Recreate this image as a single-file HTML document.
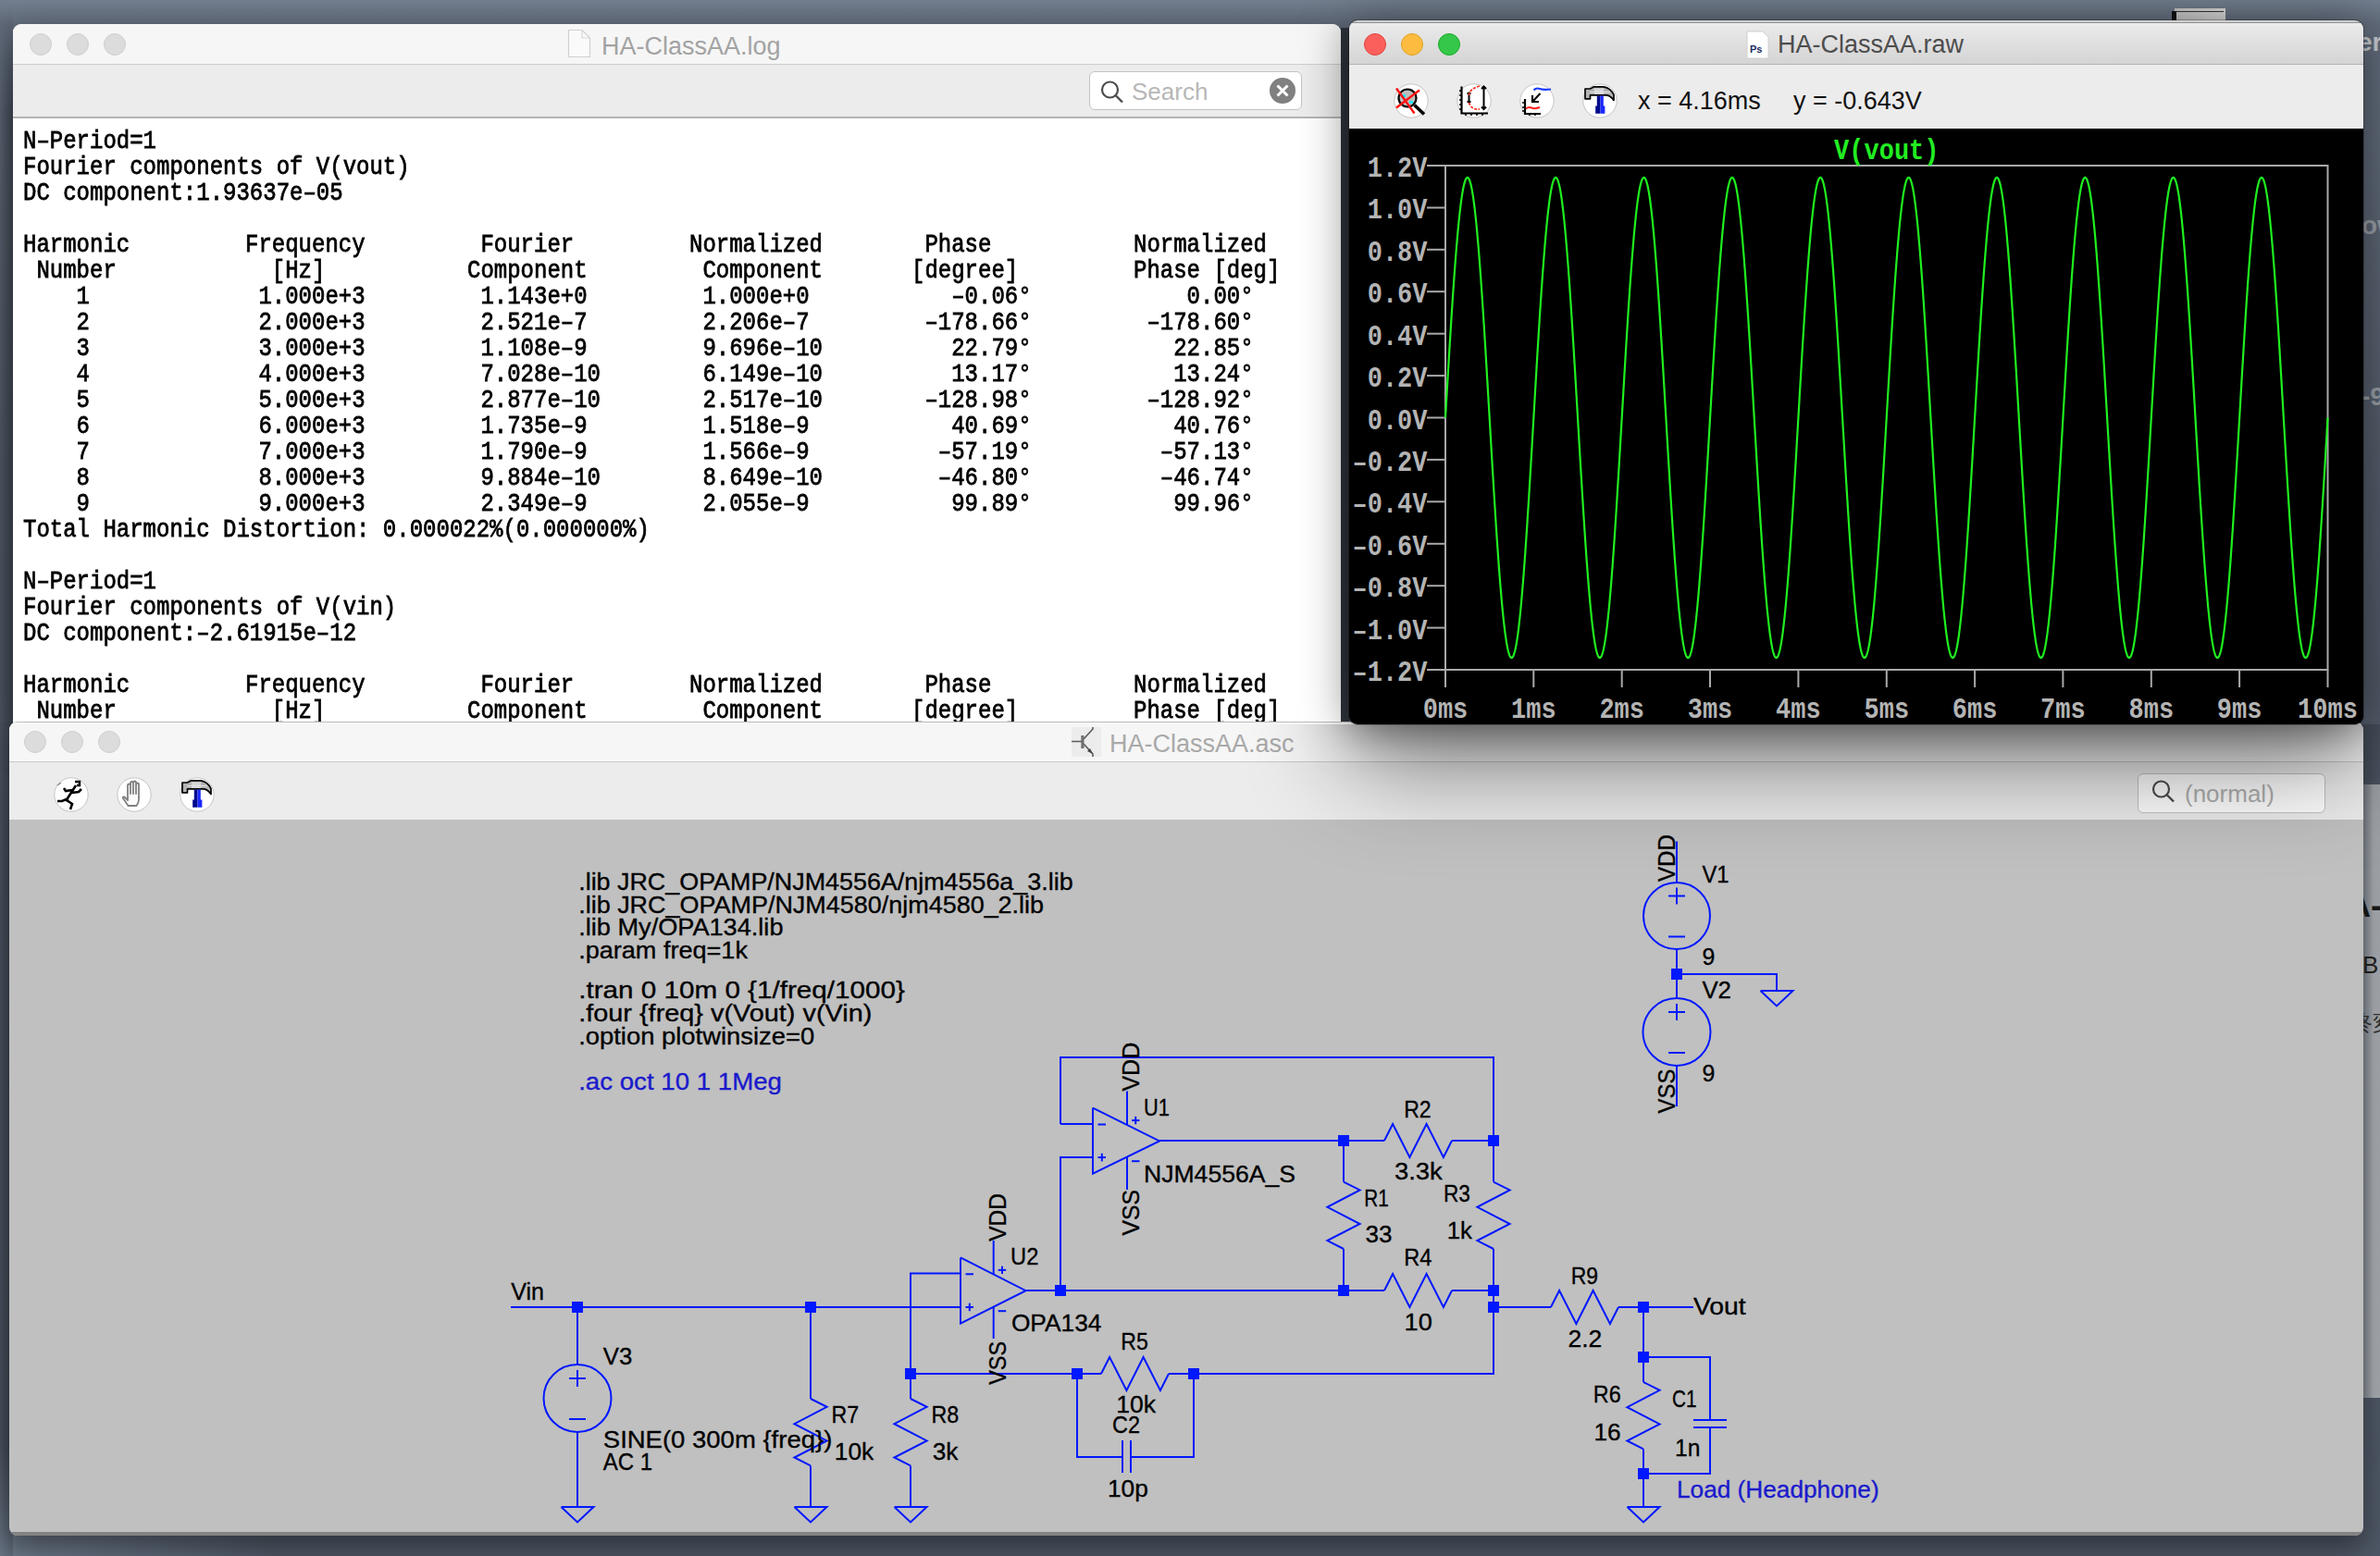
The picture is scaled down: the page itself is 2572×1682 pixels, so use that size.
<!DOCTYPE html>
<html><head><meta charset="utf-8"><title>LTspice</title>
<style>
html,body{margin:0;padding:0;}
body{width:2572px;height:1682px;overflow:hidden;position:relative;
 background:linear-gradient(180deg,#737f8f 0px,#636d7d 26px,#545d6b 500px,#4c5563 1100px,#4e5765 1682px);
 font-family:"Liberation Sans",sans-serif;}
.abs{position:absolute;}
.win{position:absolute;overflow:hidden;}
.tl{position:absolute;width:24px;height:24px;border-radius:50%;box-sizing:border-box;}
.tl.in{background:#dcdcdc;border:1px solid #cfcfcf;}
.mono{font-family:"Liberation Mono",monospace;}
.row{position:absolute;left:0;height:28px;line-height:28px;white-space:pre;font-family:"Liberation Mono",monospace;font-size:24px;color:#000;transform:scaleY(1.13);transform-origin:0 20.4px;-webkit-text-stroke:0.7px #000;}
.row span{position:absolute;top:0;}
</style></head><body>

<div class="abs" style="left:0;top:1560px;width:300px;height:122px;background:radial-gradient(ellipse at 0% 100%,#6c7888 0%,rgba(70,78,90,0) 70%);"></div>
<div class="abs" style="left:0;top:0;width:14px;height:1682px;background:linear-gradient(90deg,rgba(60,67,77,0.2),rgba(50,56,66,0.75));-webkit-mask-image:linear-gradient(180deg,rgba(0,0,0,0) 10px,#000 120px,#000 1560px,rgba(0,0,0,0.3) 1682px);"></div>
<div class="abs" style="left:2554px;top:848px;width:18px;height:663px;background:linear-gradient(90deg,#80868f,#a9adb3 60%,#a3a7ad);"></div>
<div class="abs" style="left:2536px;top:958px;font-size:36px;font-weight:bold;color:#1a1a1a;white-space:nowrap;">A-</div>
<div class="abs" style="left:2553px;top:1028px;font-size:26px;color:#222;">B</div>
<div class="abs" style="left:2540px;top:1090px;font-size:24px;color:#333;white-space:nowrap;">終変</div>
<div class="abs" style="left:2548px;top:30px;font-size:28px;color:#c8ccd2;font-weight:bold;white-space:nowrap;">er</div>
<div class="abs" style="left:2552px;top:228px;font-size:28px;color:#9aa0a8;font-weight:bold;white-space:nowrap;">ow</div>
<div class="abs" style="left:2552px;top:413px;font-size:28px;color:#9aa0a8;font-weight:bold;white-space:nowrap;">-9</div>
<div class="abs" style="left:2350px;top:9px;width:55px;height:13px;background:linear-gradient(90deg,#c8c8c8,#dcdcdc);"></div>
<div class="abs" style="left:2352px;top:12px;width:51px;height:1px;background:#333;"></div>
<div class="abs" style="left:2347px;top:12px;width:5px;height:10px;background:#111;"></div>
<div class="win" style="left:14px;top:26px;width:1435px;height:760px;border-radius:9px 9px 0 0;background:#fff;box-shadow:0 10px 40px rgba(0,0,0,0.35);">
<div class="abs" style="left:0;top:0;width:1435px;height:43px;background:#f6f6f6;border-bottom:1px solid #cdcdcd;"></div>
<div class="abs" style="left:0;top:44px;width:1435px;height:56px;background:#ececec;border-bottom:2px solid #b4b4b4;"></div>
<div class="tl in" style="left:18px;top:10px;"></div>
<div class="tl in" style="left:58px;top:10px;"></div>
<div class="tl in" style="left:98px;top:10px;"></div>
<svg class="abs" style="left:599px;top:5px;" width="26" height="32"><path d="M1.5 1.5 H16 L24.5 10 V30.5 H1.5 Z" fill="#fafafa" stroke="#d0d0d0" stroke-width="1.2"/><path d="M16 1.5 V10 H24.5" fill="none" stroke="#d8d8d8" stroke-width="1.2"/></svg>
<div class="abs" style="left:636px;top:8px;font-size:27px;color:#a3a3a3;white-space:nowrap;line-height:32px;">HA-ClassAA.log</div>
<div class="abs" style="left:1163px;top:51px;width:230px;height:42px;background:#fff;border:1px solid #c3c3c3;border-radius:6px;box-sizing:border-box;"></div>
<svg class="abs" style="left:1174px;top:60px;" width="34" height="34"><circle cx="11.5" cy="11" r="8.5" fill="none" stroke="#4d4d4d" stroke-width="2.2"/><line x1="17.5" y1="17" x2="25" y2="24.5" stroke="#4d4d4d" stroke-width="2.4"/></svg>
<div class="abs" style="left:1209px;top:57px;font-size:26px;color:#b7b7b7;line-height:32px;">Search</div>
<svg class="abs" style="left:1358px;top:58px;" width="28" height="28"><circle cx="14" cy="14" r="14" fill="#808080"/><path d="M8.5 8.5 L19.5 19.5 M19.5 8.5 L8.5 19.5" stroke="#fff" stroke-width="3"/></svg>
<div id="logtext" class="abs" style="left:0;top:0;width:1435px;height:760px;"><div class="row" style="top:113.61px;"><span style="left:11px">N–Period=1</span></div>
<div class="row" style="top:141.61px;"><span style="left:11px">Fourier components of V(vout)</span></div>
<div class="row" style="top:169.61px;"><span style="left:11px">DC component:1.93637e–05</span></div>
<div class="row" style="top:225.61px;"><span style="left:11px">Harmonic</span><span style="left:251px">Frequency</span><span style="left:491px"> Fourier </span><span style="left:731px">Normalized</span><span style="left:971px"> Phase  </span><span style="left:1211px">Normalized</span></div>
<div class="row" style="top:253.61px;"><span style="left:11px"> Number </span><span style="left:251px">  [Hz]   </span><span style="left:491px">Component</span><span style="left:731px"> Component</span><span style="left:971px">[degree]</span><span style="left:1211px">Phase [deg]</span></div>
<div class="row" style="top:281.61px;"><span style="left:11px">    1   </span><span style="left:251px"> 1.000e+3</span><span style="left:491px"> 1.143e+0</span><span style="left:731px"> 1.000e+0</span><span style="left:971px">   –0.06°</span><span style="left:1211px">    0.00°</span></div>
<div class="row" style="top:309.61px;"><span style="left:11px">    2   </span><span style="left:251px"> 2.000e+3</span><span style="left:491px"> 2.521e–7</span><span style="left:731px"> 2.206e–7</span><span style="left:971px"> –178.66°</span><span style="left:1211px"> –178.60°</span></div>
<div class="row" style="top:337.61px;"><span style="left:11px">    3   </span><span style="left:251px"> 3.000e+3</span><span style="left:491px"> 1.108e–9</span><span style="left:731px"> 9.696e–10</span><span style="left:971px">   22.79°</span><span style="left:1211px">   22.85°</span></div>
<div class="row" style="top:365.61px;"><span style="left:11px">    4   </span><span style="left:251px"> 4.000e+3</span><span style="left:491px"> 7.028e–10</span><span style="left:731px"> 6.149e–10</span><span style="left:971px">   13.17°</span><span style="left:1211px">   13.24°</span></div>
<div class="row" style="top:393.61px;"><span style="left:11px">    5   </span><span style="left:251px"> 5.000e+3</span><span style="left:491px"> 2.877e–10</span><span style="left:731px"> 2.517e–10</span><span style="left:971px"> –128.98°</span><span style="left:1211px"> –128.92°</span></div>
<div class="row" style="top:421.61px;"><span style="left:11px">    6   </span><span style="left:251px"> 6.000e+3</span><span style="left:491px"> 1.735e–9</span><span style="left:731px"> 1.518e–9</span><span style="left:971px">   40.69°</span><span style="left:1211px">   40.76°</span></div>
<div class="row" style="top:449.61px;"><span style="left:11px">    7   </span><span style="left:251px"> 7.000e+3</span><span style="left:491px"> 1.790e–9</span><span style="left:731px"> 1.566e–9</span><span style="left:971px">  –57.19°</span><span style="left:1211px">  –57.13°</span></div>
<div class="row" style="top:477.61px;"><span style="left:11px">    8   </span><span style="left:251px"> 8.000e+3</span><span style="left:491px"> 9.884e–10</span><span style="left:731px"> 8.649e–10</span><span style="left:971px">  –46.80°</span><span style="left:1211px">  –46.74°</span></div>
<div class="row" style="top:505.61px;"><span style="left:11px">    9   </span><span style="left:251px"> 9.000e+3</span><span style="left:491px"> 2.349e–9</span><span style="left:731px"> 2.055e–9</span><span style="left:971px">   99.89°</span><span style="left:1211px">   99.96°</span></div>
<div class="row" style="top:533.61px;"><span style="left:11px">Total Harmonic Distortion: 0.000022%(0.000000%)</span></div>
<div class="row" style="top:589.61px;"><span style="left:11px">N–Period=1</span></div>
<div class="row" style="top:617.61px;"><span style="left:11px">Fourier components of V(vin)</span></div>
<div class="row" style="top:645.61px;"><span style="left:11px">DC component:–2.61915e–12</span></div>
<div class="row" style="top:701.61px;"><span style="left:11px">Harmonic</span><span style="left:251px">Frequency</span><span style="left:491px"> Fourier </span><span style="left:731px">Normalized</span><span style="left:971px"> Phase  </span><span style="left:1211px">Normalized</span></div>
<div class="row" style="top:729.61px;"><span style="left:11px"> Number </span><span style="left:251px">  [Hz]   </span><span style="left:491px">Component</span><span style="left:731px"> Component</span><span style="left:971px">[degree]</span><span style="left:1211px">Phase [deg]</span></div>
<div class="row" style="top:757.61px;"><span style="left:11px">    1   </span><span style="left:251px"> 1.000e+3</span><span style="left:491px"> 3.000e–1</span><span style="left:731px"> 1.000e+0</span><span style="left:971px">    0.00°</span><span style="left:1211px">    0.00°</span></div></div>
</div>
<div class="abs" style="left:10px;top:780px;width:2544px;height:880px;border-radius:9px;box-shadow:0 12px 30px rgba(0,0,0,0.42);clip-path:inset(0 -80px -80px -80px);"></div>
<div class="win" style="left:10px;top:780px;width:2544px;height:880px;border-radius:9px;background:#c0c0c0;">
<div class="abs" style="left:0;top:0;width:2544px;height:43px;background:#f6f6f6;border-bottom:1px solid #c9c9c9;"></div>
<div class="abs" style="left:0;top:0;width:2544px;height:1px;background:#bcbcbc;"></div>
<div class="abs" style="left:0;top:44px;width:2544px;height:62px;background:#ececec;"></div>
<div class="abs" style="left:0;top:876px;width:2544px;height:4px;background:#838383;"></div>
<div class="tl in" style="left:16px;top:10px;"></div>
<div class="tl in" style="left:56px;top:10px;"></div>
<div class="tl in" style="left:96px;top:10px;"></div>
<svg class="abs" style="left:1148px;top:6px;" width="32" height="32"><rect x="0" y="0" width="32" height="32" fill="#ececec"/><path d="M0 15.5 H11 M11.5 9 V23 M13 13 L23 2 V0 M13 18 L23 29 V32" stroke="#5a5a5a" stroke-width="1.6" fill="none"/><rect x="10.5" y="9" width="3" height="14" fill="#707070"/><path d="M23 29 L17 26 L20 23 Z" fill="#444"/></svg>
<div class="abs" style="left:1189px;top:8px;font-size:27px;color:#a9a9a9;white-space:nowrap;line-height:32px;">HA-ClassAA.asc</div>
<div id="asctool" class="abs" style="left:0;top:44px;width:2544px;height:62px;"><div style="position:absolute;left:47.7px;top:15.8px;width:38px;height:38px;"><svg width="38" height="38" viewBox="0 0 38 38"><circle cx="19" cy="19" r="18.2" fill="#fff" stroke="#c4c4c4" stroke-width="1"/><path d="M23 5 h5 v4 h-3" fill="none" stroke="#000" stroke-width="2.4"/><path d="M24 9 L13 26 M20 14 L13 15 L11 12 M19 17 L27 16 L30 13 M16 23 L9 26 L4 26 M14 25 L20 29 L18 35" fill="none" stroke="#000" stroke-width="2.6"/><path d="M4 9 L8 6" stroke="#888" stroke-width="1.2"/></svg></div><div style="position:absolute;left:115.9px;top:15.8px;width:38px;height:38px;"><svg width="38" height="38" viewBox="0 0 38 38"><circle cx="19" cy="19" r="18.2" fill="#fff" stroke="#c4c4c4" stroke-width="1"/><path d="M12.5 31 L7 23 Q6 21 8.5 21.5 L12 25 V9 Q12 7.5 13.5 7.5 T15 9 V18 V6.5 Q15 5 16.5 5 T18 6.5 V18 V6 Q18 4.5 19.5 4.5 T21 6 V18 V8 Q21 6.5 22.5 6.5 T24 8 V24 Q24 28 21.5 31 Z" fill="#fafafa" stroke="#808080" stroke-width="1.8" stroke-linejoin="round"/></svg></div><div style="position:absolute;left:184.0px;top:15.8px;width:38px;height:38px;"><svg width="38" height="38" viewBox="0 0 38 38"><circle cx="19" cy="19" r="18.2" fill="#fff" stroke="#c4c4c4" stroke-width="1"/><path d="M3 6 H8.5 L12.5 3.8 H23 Q30.5 5 34 12.5 V18.5 Q31.5 14 26.5 12.8 H8.5 V16.8 H3 Z" fill="#b4b4b4" stroke="#000" stroke-width="1.7" stroke-linejoin="round"/><path d="M13 5.5 H23 V12 H13 Z" fill="#d8d8d8"/><path d="M8.5 9.5 H30" stroke="#e6e6e6" stroke-width="1.2"/><path d="M15.8 13.5 H19.5 V24.5 H19.5 V32.8 H14.2 V24.5 H15.8 Z" fill="#000a8c"/><path d="M19.5 13.5 H22.8 V24.5 H24.4 V32.8 H19.5 Z" fill="#1a28ff"/></svg></div></div>
<div class="abs" style="left:2300px;top:56px;width:203px;height:43px;background:#fff;border:1px solid #c3c3c3;border-radius:6px;box-sizing:border-box;"></div>
<svg class="abs" style="left:2314px;top:62px;" width="34" height="34"><circle cx="11.5" cy="11" r="8.5" fill="none" stroke="#4d4d4d" stroke-width="2.2"/><line x1="17.5" y1="17" x2="25" y2="24.5" stroke="#4d4d4d" stroke-width="2.4"/></svg>
<div class="abs" style="left:2351px;top:62px;font-size:26px;color:#b0b0b0;line-height:32px;">(normal)</div>
<div id="sch" class="abs" style="left:0;top:106px;width:2544px;height:770px;"><svg width="2544" height="770" style="position:absolute;left:0;top:0;"><g transform="translate(-10 -886)"><g fill="none" stroke="#0018ff" stroke-width="2" stroke-linejoin="miter" stroke-linecap="butt"><path d="M1146.0 1215.0 L1146.0 1143.0 L1614.0 1143.0 L1614.0 1233.0"/><path d="M1146.0 1215.0 L1181.0 1215.0"/><path d="M1146.0 1395.0 L1146.0 1251.0 L1181.0 1251.0"/><path d="M1181.0 1197.6 L1253.0 1233.4 L1181.0 1268.7 L1181.0 1197.6"/><path d="M1186.5 1215.5 L1195.0 1215.5"/><path d="M1186.5 1251.1 L1195.0 1251.1"/><path d="M1190.8 1246.8 L1190.8 1255.4"/><path d="M1223.0 1211.1 L1231.5 1211.1"/><path d="M1227.2 1206.9 L1227.2 1215.3"/><path d="M1223.0 1255.2 L1231.5 1255.2"/><path d="M1218.0 1179.5 L1218.0 1216.0"/><path d="M1218.0 1251.0 L1218.0 1286.0"/><path d="M1253.0 1233.0 L1496.0 1233.0"/><path d="M1496.0 1233.0 L1505.1 1215.0 L1523.4 1251.0 L1541.6 1215.0 L1559.9 1251.0 L1569.0 1233.0"/><path d="M1569.0 1233.0 L1614.0 1233.0"/><path d="M1452.0 1233.0 L1452.0 1277.6"/><path d="M1452.0 1277.6 L1469.6 1286.4 L1434.4 1304.8 L1469.6 1323.0 L1434.4 1341.1 L1452.0 1350.0"/><path d="M1452.0 1350.0 L1452.0 1395.0"/><path d="M1614.0 1233.0 L1614.0 1277.6"/><path d="M1614.0 1277.6 L1631.6 1286.4 L1596.4 1304.8 L1631.6 1323.0 L1596.4 1341.1 L1614.0 1350.0"/><path d="M1614.0 1350.0 L1614.0 1485.0 L1290.0 1485.0"/><path d="M1108.5 1395.0 L1496.0 1395.0"/><path d="M1496.0 1395.0 L1505.1 1377.0 L1523.4 1413.0 L1541.6 1377.0 L1559.9 1413.0 L1569.0 1395.0"/><path d="M1569.0 1395.0 L1614.0 1395.0"/><path d="M984.0 1485.0 L1190.0 1485.0"/><path d="M1190.0 1485.0 L1199.1 1467.0 L1217.4 1503.0 L1235.6 1467.0 L1253.9 1503.0 L1263.0 1485.0"/><path d="M1263.0 1485.0 L1290.0 1485.0"/><path d="M1164.0 1485.0 L1164.0 1575.0 L1213.0 1575.0"/><path d="M1213.0 1557.0 L1213.0 1592.0"/><path d="M1222.0 1557.0 L1222.0 1592.0"/><path d="M1222.0 1575.0 L1290.0 1575.0 L1290.0 1485.0"/><path d="M1614.0 1413.0 L1676.0 1413.0"/><path d="M1676.0 1413.0 L1685.1 1395.0 L1703.4 1431.0 L1721.6 1395.0 L1739.9 1431.0 L1749.0 1413.0"/><path d="M1749.0 1413.0 L1830.0 1413.0"/><path d="M1776.0 1413.0 L1776.0 1494.0"/><path d="M1776.0 1494.0 L1793.6 1502.8 L1758.4 1521.2 L1793.6 1539.4 L1758.4 1557.5 L1776.0 1566.4"/><path d="M1776.0 1566.4 L1776.0 1629.0"/><path d="M1758.5 1629.0 L1793.5 1629.0 L1776.0 1645.5 L1758.5 1629.0"/><path d="M1776.0 1467.0 L1848.0 1467.0 L1848.0 1535.0"/><path d="M1830.0 1535.0 L1866.0 1535.0"/><path d="M1830.0 1543.0 L1866.0 1543.0"/><path d="M1848.0 1543.0 L1848.0 1593.0 L1776.0 1593.0"/><path d="M552.0 1413.0 L1038.0 1413.0"/><path d="M624.0 1413.0 L624.0 1475.0"/><circle cx="624.0" cy="1511.5" r="36.5"/><path d="M615.0 1490.0 L633.0 1490.0"/><path d="M624.0 1481.0 L624.0 1499.0"/><path d="M615.0 1534.0 L633.0 1534.0"/><path d="M624.0 1548.0 L624.0 1629.0"/><path d="M606.5 1629.0 L641.5 1629.0 L624.0 1645.5 L606.5 1629.0"/><path d="M876.0 1413.0 L876.0 1512.0"/><path d="M876.0 1512.0 L893.6 1520.8 L858.4 1539.2 L893.6 1557.4 L858.4 1575.5 L876.0 1584.4"/><path d="M876.0 1584.5 L876.0 1629.0"/><path d="M858.5 1629.0 L893.5 1629.0 L876.0 1645.5 L858.5 1629.0"/><path d="M1038.0 1376.5 L984.0 1376.5 L984.0 1512.0"/><path d="M984.0 1512.0 L1001.6 1520.8 L966.4 1539.2 L1001.6 1557.4 L966.4 1575.5 L984.0 1584.4"/><path d="M984.0 1584.5 L984.0 1629.0"/><path d="M966.5 1629.0 L1001.5 1629.0 L984.0 1645.5 L966.5 1629.0"/><path d="M1038.0 1359.4 L1108.5 1395.2 L1038.0 1430.7 L1038.0 1359.4"/><path d="M1043.5 1377.3 L1052.0 1377.3"/><path d="M1043.5 1413.0 L1052.0 1413.0"/><path d="M1047.8 1408.7 L1047.8 1417.2"/><path d="M1078.7 1372.9 L1087.2 1372.9"/><path d="M1083.0 1368.7 L1083.0 1377.1"/><path d="M1078.7 1417.2 L1087.2 1417.2"/><path d="M1073.7 1341.0 L1073.7 1378.0"/><path d="M1073.7 1412.0 L1073.7 1447.0"/><path d="M1812.0 909.5 L1812.0 954.0"/><circle cx="1812.0" cy="990.0" r="36.0"/><path d="M1803.0 968.5 L1821.0 968.5"/><path d="M1812.0 959.5 L1812.0 977.5"/><path d="M1803.0 1012.5 L1821.0 1012.5"/><path d="M1812.0 1026.0 L1812.0 1079.0"/><circle cx="1812.0" cy="1115.5" r="36.5"/><path d="M1803.0 1094.0 L1821.0 1094.0"/><path d="M1812.0 1085.0 L1812.0 1103.0"/><path d="M1803.0 1138.0 L1821.0 1138.0"/><path d="M1812.0 1152.0 L1812.0 1196.0"/><path d="M1812.0 1053.0 L1920.0 1053.0 L1920.0 1071.0"/><path d="M1902.5 1071.0 L1937.5 1071.0 L1920.0 1087.5 L1902.5 1071.0"/><rect x="618.0" y="1407.0" width="12" height="12" fill="#0018ff" stroke="none"/><rect x="870.0" y="1407.0" width="12" height="12" fill="#0018ff" stroke="none"/><rect x="978.0" y="1479.0" width="12" height="12" fill="#0018ff" stroke="none"/><rect x="1140.0" y="1389.0" width="12" height="12" fill="#0018ff" stroke="none"/><rect x="1446.0" y="1227.0" width="12" height="12" fill="#0018ff" stroke="none"/><rect x="1608.0" y="1227.0" width="12" height="12" fill="#0018ff" stroke="none"/><rect x="1446.0" y="1389.0" width="12" height="12" fill="#0018ff" stroke="none"/><rect x="1608.0" y="1389.0" width="12" height="12" fill="#0018ff" stroke="none"/><rect x="1608.0" y="1407.0" width="12" height="12" fill="#0018ff" stroke="none"/><rect x="1158.0" y="1479.0" width="12" height="12" fill="#0018ff" stroke="none"/><rect x="1284.0" y="1479.0" width="12" height="12" fill="#0018ff" stroke="none"/><rect x="1770.0" y="1407.0" width="12" height="12" fill="#0018ff" stroke="none"/><rect x="1770.0" y="1461.0" width="12" height="12" fill="#0018ff" stroke="none"/><rect x="1770.0" y="1587.0" width="12" height="12" fill="#0018ff" stroke="none"/><rect x="1806.0" y="1047.0" width="12" height="12" fill="#0018ff" stroke="none"/></g><g font-family="Liberation Sans" font-size="26.5" fill="#000" stroke-width="0.35"><text x="625.20" y="961.6" fill="#000" stroke="#000" textLength="534.40" lengthAdjust="spacingAndGlyphs">.lib JRC_OPAMP/NJM4556A/njm4556a_3.lib</text><text x="625.20" y="986.8" fill="#000" stroke="#000" textLength="502.88" lengthAdjust="spacingAndGlyphs">.lib JRC_OPAMP/NJM4580/njm4580_2.lib</text><text x="625.20" y="1010.7" fill="#000" stroke="#000" textLength="221.31" lengthAdjust="spacingAndGlyphs">.lib My/OPA134.lib</text><text x="625.20" y="1036.0" fill="#000" stroke="#000" textLength="182.76" lengthAdjust="spacingAndGlyphs">.param freq=1k</text><text x="625.20" y="1079.3" fill="#000" stroke="#000" textLength="352.77" lengthAdjust="spacingAndGlyphs">.tran 0 10m 0 {1/freq/1000}</text><text x="625.20" y="1104.0" fill="#000" stroke="#000" textLength="317.15" lengthAdjust="spacingAndGlyphs">.four {freq} v(Vout) v(Vin)</text><text x="625.20" y="1128.7" fill="#000" stroke="#000" textLength="255.05" lengthAdjust="spacingAndGlyphs">.option plotwinsize=0</text><text x="625.20" y="1178.4" fill="#1a1acc" stroke="#1a1acc" textLength="219.75" lengthAdjust="spacingAndGlyphs">.ac oct 10 1 1Meg</text><text transform="translate(1230.5 1179.6) rotate(-90)" stroke="#000" x="0.00" y="0" textLength="52.85" lengthAdjust="spacingAndGlyphs">VDD</text><text transform="translate(1231.0 1335.5) rotate(-90)" stroke="#000" x="0.00" y="0" textLength="49.52" lengthAdjust="spacingAndGlyphs">VSS</text><text x="1236.00" y="1205.7" fill="#000" stroke="#000" textLength="27.88" lengthAdjust="spacingAndGlyphs">U1</text><text x="1236.00" y="1277.5" fill="#000" stroke="#000" textLength="164.00" lengthAdjust="spacingAndGlyphs">NJM4556A_S</text><text x="1517.20" y="1207.5" fill="#000" stroke="#000" textLength="29.48" lengthAdjust="spacingAndGlyphs">R2</text><text x="1507.00" y="1275.0" fill="#000" stroke="#000" textLength="51.79" lengthAdjust="spacingAndGlyphs">3.3k</text><text x="1474.30" y="1304.0" fill="#000" stroke="#000" textLength="26.48" lengthAdjust="spacingAndGlyphs">R1</text><text x="1475.60" y="1343.0" fill="#000" stroke="#000" textLength="28.98" lengthAdjust="spacingAndGlyphs">33</text><text x="1560.00" y="1299.0" fill="#000" stroke="#000" textLength="28.98" lengthAdjust="spacingAndGlyphs">R3</text><text x="1563.80" y="1339.0" fill="#000" stroke="#000" textLength="27.19" lengthAdjust="spacingAndGlyphs">1k</text><text x="1517.20" y="1368.0" fill="#000" stroke="#000" textLength="30.18" lengthAdjust="spacingAndGlyphs">R4</text><text x="1517.60" y="1438.0" fill="#000" stroke="#000" textLength="30.27" lengthAdjust="spacingAndGlyphs">10</text><text x="1092.10" y="1367.0" fill="#000" stroke="#000" textLength="30.28" lengthAdjust="spacingAndGlyphs">U2</text><text x="1092.90" y="1438.5" fill="#000" stroke="#000" textLength="97.51" lengthAdjust="spacingAndGlyphs">OPA134</text><text transform="translate(1087.0 1341.8) rotate(-90)" stroke="#000" x="0.00" y="0" textLength="51.75" lengthAdjust="spacingAndGlyphs">VDD</text><text transform="translate(1087.0 1496.8) rotate(-90)" stroke="#000" x="0.00" y="0" textLength="46.82" lengthAdjust="spacingAndGlyphs">VSS</text><text x="552.20" y="1405.0" fill="#000" stroke="#000" textLength="35.82" lengthAdjust="spacingAndGlyphs">Vin</text><text x="651.80" y="1475.0" fill="#000" stroke="#000" textLength="31.51" lengthAdjust="spacingAndGlyphs">V3</text><text x="651.80" y="1565.0" fill="#000" stroke="#000" textLength="247.51" lengthAdjust="spacingAndGlyphs">SINE(0 300m {freq})</text><text x="651.80" y="1589.0" fill="#000" stroke="#000" textLength="53.41" lengthAdjust="spacingAndGlyphs">AC 1</text><text x="898.50" y="1538.0" fill="#000" stroke="#000" textLength="29.78" lengthAdjust="spacingAndGlyphs">R7</text><text x="901.80" y="1578.0" fill="#000" stroke="#000" textLength="42.33" lengthAdjust="spacingAndGlyphs">10k</text><text x="1006.40" y="1538.0" fill="#000" stroke="#000" textLength="29.78" lengthAdjust="spacingAndGlyphs">R8</text><text x="1007.70" y="1578.0" fill="#000" stroke="#000" textLength="27.69" lengthAdjust="spacingAndGlyphs">3k</text><text x="1211.30" y="1459.0" fill="#000" stroke="#000" textLength="29.48" lengthAdjust="spacingAndGlyphs">R5</text><text x="1206.30" y="1526.7" fill="#000" stroke="#000" textLength="42.72" lengthAdjust="spacingAndGlyphs">10k</text><text x="1202.00" y="1549.4" fill="#000" stroke="#000" textLength="29.98" lengthAdjust="spacingAndGlyphs">C2</text><text x="1197.00" y="1617.5" fill="#000" stroke="#000" textLength="43.81" lengthAdjust="spacingAndGlyphs">10p</text><text x="1697.70" y="1387.8" fill="#000" stroke="#000" textLength="29.38" lengthAdjust="spacingAndGlyphs">R9</text><text x="1694.50" y="1455.7" fill="#000" stroke="#000" textLength="36.84" lengthAdjust="spacingAndGlyphs">2.2</text><text x="1830.00" y="1421.4" fill="#000" stroke="#000" textLength="56.75" lengthAdjust="spacingAndGlyphs">Vout</text><text x="1721.80" y="1516.0" fill="#000" stroke="#000" textLength="29.88" lengthAdjust="spacingAndGlyphs">R6</text><text x="1722.50" y="1556.5" fill="#000" stroke="#000" textLength="29.18" lengthAdjust="spacingAndGlyphs">16</text><text x="1807.00" y="1521.0" fill="#000" stroke="#000" textLength="26.58" lengthAdjust="spacingAndGlyphs">C1</text><text x="1810.00" y="1574.4" fill="#000" stroke="#000" textLength="27.38" lengthAdjust="spacingAndGlyphs">1n</text><text x="1812.00" y="1619.3" fill="#1a1acc" stroke="#1a1acc" textLength="218.70" lengthAdjust="spacingAndGlyphs">Load (Headphone)</text><text transform="translate(1809.5 953.0) rotate(-90)" stroke="#000" x="0.00" y="0" textLength="50.95" lengthAdjust="spacingAndGlyphs">VDD</text><text x="1839.40" y="953.8" fill="#000" stroke="#000" textLength="29.11" lengthAdjust="spacingAndGlyphs">V1</text><text x="1839.40" y="1042.8" fill="#000" stroke="#000" textLength="13.84" lengthAdjust="spacingAndGlyphs">9</text><text x="1839.40" y="1079.0" fill="#000" stroke="#000" textLength="31.61" lengthAdjust="spacingAndGlyphs">V2</text><text x="1839.40" y="1168.8" fill="#000" stroke="#000" textLength="13.84" lengthAdjust="spacingAndGlyphs">9</text><text transform="translate(1809.5 1203.4) rotate(-90)" stroke="#000" x="0.00" y="0" textLength="47.72" lengthAdjust="spacingAndGlyphs">VSS</text></g></g></svg></div>
</div>
<div class="abs" style="left:1449px;top:30px;width:9px;height:750px;background:#2e333b;"></div>
<div class="abs" style="left:1458px;top:22px;width:1096px;height:761px;border-radius:9px;box-shadow:0 45px 110px rgba(0,0,0,0.48);clip-path:inset(761px -250px -300px -250px);"></div>
<div class="win" style="left:1458px;top:22px;width:1096px;height:761px;border-radius:9px;background:#000;box-shadow:0 0 0 1px rgba(0,0,0,0.25), 0 4px 50px rgba(0,0,0,0.5);">
<div class="abs" style="left:0;top:0;width:1096px;height:47px;background:linear-gradient(180deg,#cfcfcf 0px,#cfcfcf 2px,#8f8f8f 2px,#8f8f8f 3px,#ecebec 3px,#d4d4d4);border-bottom:1px solid #b3b3b3;"></div>
<div class="abs" style="left:0;top:48px;width:1096px;height:69px;background:#ececec;"></div>
<div class="tl" style="left:16px;top:14px;background:#fc605c;border:1px solid #e0443e;"></div>
<div class="tl" style="left:56px;top:14px;background:#fdbc40;border:1px solid #dea123;"></div>
<div class="tl" style="left:96px;top:14px;background:#34c749;border:1px solid #1aab29;"></div>
<svg class="abs" style="left:429px;top:11px;" width="25" height="31"><path d="M1 1 H18 L24 7 V30 H1 Z" fill="#fff" stroke="#cfcfcf" stroke-width="1"/><text x="4" y="24" font-family="Liberation Sans" font-size="11" font-weight="bold" fill="#1d2a5c">Ps</text></svg>
<div class="abs" style="left:463px;top:10px;font-size:27px;color:#4d4d4d;white-space:nowrap;line-height:32px;">HA-ClassAA.raw</div>
<div id="rawtool" class="abs" style="left:0;top:48px;width:1096px;height:69px;"><div style="position:absolute;left:48.1px;top:19.5px;width:38px;height:38px;"><svg width="38" height="38" viewBox="0 0 38 38"><circle cx="19" cy="19" r="18.2" fill="#fff" stroke="#c4c4c4" stroke-width="1"/><circle cx="15" cy="16" r="9.5" fill="#bdbdbd" stroke="#000" stroke-width="2.2"/><path d="M9 12 h4 v3 h-4z M17 19 h4 v3 h-4z" fill="#22e6f0"/><path d="M22.5 23.5 L33 33.5" stroke="#000" stroke-width="3.6"/><path d="M3 5.5 L22.5 32.5 M28 7.5 L3 26.5" stroke="#ff1010" stroke-width="2.4"/></svg></div><div style="position:absolute;left:115.9px;top:19.5px;width:38px;height:38px;"><svg width="38" height="38" viewBox="0 0 38 38"><circle cx="19" cy="19" r="18.2" fill="#fff" stroke="#c4c4c4" stroke-width="1"/><path d="M5.5 3.5 V32.5 H34" fill="none" stroke="#000" stroke-width="2.2"/><path d="M3 8 h3 M3 13 h3 M3 18 h3 M3 23 h3 M3 28 h3 M10 32 v3 M16 32 v3 M22 32 v3 M28 32 v3" stroke="#000" stroke-width="1.6"/><path d="M13.5 9.5 V21.5 M11.5 11 h4 M11.5 20 h4 M29.5 3.5 V28 M27 6 l2.5 -2.5 l2.5 2.5 M27 25.5 l2.5 2.5 l2.5 -2.5" fill="none" stroke="#000" stroke-width="2"/><path d="M25 3 Q14 6 13.5 13 M13.5 21 Q16 29 25 28" fill="none" stroke="#ff3020" stroke-width="1.8" stroke-dasharray="3 1.5"/></svg></div><div style="position:absolute;left:183.6px;top:19.5px;width:38px;height:38px;"><svg width="38" height="38" viewBox="0 0 38 38"><circle cx="19" cy="19" r="18.2" fill="#fff" stroke="#c4c4c4" stroke-width="1"/><path d="M6 17 V33 H23" fill="none" stroke="#000" stroke-width="2.2"/><path d="M3 21 h3 M3 26 h3 M3 30 h3 M11 32 v3 M17 32 v3" stroke="#000" stroke-width="1.6"/><path d="M7 27.5 Q10 25 13 26.5 T22 26" fill="none" stroke="#ff2020" stroke-width="2"/><path d="M15.5 7.5 Q18 4.5 22 6 T34 6.5" fill="none" stroke="#1a3cff" stroke-width="2.2"/><path d="M22.5 11 L15 19" stroke="#000" stroke-width="2"/><path d="M14 13 V20 H21" fill="none" stroke="#000" stroke-width="2.2"/></svg></div><div style="position:absolute;left:251.9px;top:19.5px;width:38px;height:38px;"><svg width="38" height="38" viewBox="0 0 38 38"><circle cx="19" cy="19" r="18.2" fill="#fff" stroke="#c4c4c4" stroke-width="1"/><path d="M3 6 H8.5 L12.5 3.8 H23 Q30.5 5 34 12.5 V18.5 Q31.5 14 26.5 12.8 H8.5 V16.8 H3 Z" fill="#b4b4b4" stroke="#000" stroke-width="1.7" stroke-linejoin="round"/><path d="M13 5.5 H23 V12 H13 Z" fill="#d8d8d8"/><path d="M8.5 9.5 H30" stroke="#e6e6e6" stroke-width="1.2"/><path d="M15.8 13.5 H19.5 V24.5 H19.5 V32.8 H14.2 V24.5 H15.8 Z" fill="#000a8c"/><path d="M19.5 13.5 H22.8 V24.5 H24.4 V32.8 H19.5 Z" fill="#1a28ff"/></svg></div></div>
<div class="abs" style="left:312px;top:71px;font-size:27px;color:#111;white-space:pre;line-height:32px;">x = 4.16ms</div>
<div class="abs" style="left:480px;top:71px;font-size:27px;color:#111;white-space:pre;line-height:32px;">y = -0.643V</div>
<div id="plot" class="abs" style="left:0;top:117px;width:1096px;height:644px;"><div style="position:absolute;left:0;top:0;font-family:'Liberation Mono',monospace;font-size:27px;fill:#b5b5b5;"><svg font-family="Liberation Mono" font-size="27" font-weight="bold" fill="#b4b4b4" width="1096" height="644" style="position:absolute;left:0;top:0;"><rect x="104.0" y="40.0" width="953.5" height="545.0" fill="none" stroke="#a9a9a9" stroke-width="2"/><line x1="84.0" y1="40.0" x2="104.0" y2="40.0" stroke="#a9a9a9" stroke-width="2"/><text transform="translate(84.5 52.0) scale(1 1.14)" text-anchor="end">1.2V</text><line x1="84.0" y1="85.4" x2="104.0" y2="85.4" stroke="#a9a9a9" stroke-width="2"/><text transform="translate(84.5 97.4) scale(1 1.14)" text-anchor="end">1.0V</text><line x1="84.0" y1="130.8" x2="104.0" y2="130.8" stroke="#a9a9a9" stroke-width="2"/><text transform="translate(84.5 142.8) scale(1 1.14)" text-anchor="end">0.8V</text><line x1="84.0" y1="176.2" x2="104.0" y2="176.2" stroke="#a9a9a9" stroke-width="2"/><text transform="translate(84.5 188.2) scale(1 1.14)" text-anchor="end">0.6V</text><line x1="84.0" y1="221.7" x2="104.0" y2="221.7" stroke="#a9a9a9" stroke-width="2"/><text transform="translate(84.5 233.7) scale(1 1.14)" text-anchor="end">0.4V</text><line x1="84.0" y1="267.1" x2="104.0" y2="267.1" stroke="#a9a9a9" stroke-width="2"/><text transform="translate(84.5 279.1) scale(1 1.14)" text-anchor="end">0.2V</text><line x1="84.0" y1="312.5" x2="104.0" y2="312.5" stroke="#a9a9a9" stroke-width="2"/><text transform="translate(84.5 324.5) scale(1 1.14)" text-anchor="end">0.0V</text><line x1="84.0" y1="357.9" x2="104.0" y2="357.9" stroke="#a9a9a9" stroke-width="2"/><text transform="translate(84.5 369.9) scale(1 1.14)" text-anchor="end">–0.2V</text><line x1="84.0" y1="403.3" x2="104.0" y2="403.3" stroke="#a9a9a9" stroke-width="2"/><text transform="translate(84.5 415.3) scale(1 1.14)" text-anchor="end">–0.4V</text><line x1="84.0" y1="448.8" x2="104.0" y2="448.8" stroke="#a9a9a9" stroke-width="2"/><text transform="translate(84.5 460.8) scale(1 1.14)" text-anchor="end">–0.6V</text><line x1="84.0" y1="494.2" x2="104.0" y2="494.2" stroke="#a9a9a9" stroke-width="2"/><text transform="translate(84.5 506.2) scale(1 1.14)" text-anchor="end">–0.8V</text><line x1="84.0" y1="539.6" x2="104.0" y2="539.6" stroke="#a9a9a9" stroke-width="2"/><text transform="translate(84.5 551.6) scale(1 1.14)" text-anchor="end">–1.0V</text><line x1="84.0" y1="585.0" x2="104.0" y2="585.0" stroke="#a9a9a9" stroke-width="2"/><text transform="translate(84.5 597.0) scale(1 1.14)" text-anchor="end">–1.2V</text><line x1="104.0" y1="585.0" x2="104.0" y2="604.0" stroke="#a9a9a9" stroke-width="2"/><text transform="translate(104.0 636.5) scale(1 1.14)" text-anchor="middle">0ms</text><line x1="199.3" y1="585.0" x2="199.3" y2="604.0" stroke="#a9a9a9" stroke-width="2"/><text transform="translate(199.3 636.5) scale(1 1.14)" text-anchor="middle">1ms</text><line x1="294.7" y1="585.0" x2="294.7" y2="604.0" stroke="#a9a9a9" stroke-width="2"/><text transform="translate(294.7 636.5) scale(1 1.14)" text-anchor="middle">2ms</text><line x1="390.0" y1="585.0" x2="390.0" y2="604.0" stroke="#a9a9a9" stroke-width="2"/><text transform="translate(390.0 636.5) scale(1 1.14)" text-anchor="middle">3ms</text><line x1="485.4" y1="585.0" x2="485.4" y2="604.0" stroke="#a9a9a9" stroke-width="2"/><text transform="translate(485.4 636.5) scale(1 1.14)" text-anchor="middle">4ms</text><line x1="580.8" y1="585.0" x2="580.8" y2="604.0" stroke="#a9a9a9" stroke-width="2"/><text transform="translate(580.8 636.5) scale(1 1.14)" text-anchor="middle">5ms</text><line x1="676.1" y1="585.0" x2="676.1" y2="604.0" stroke="#a9a9a9" stroke-width="2"/><text transform="translate(676.1 636.5) scale(1 1.14)" text-anchor="middle">6ms</text><line x1="771.4" y1="585.0" x2="771.4" y2="604.0" stroke="#a9a9a9" stroke-width="2"/><text transform="translate(771.4 636.5) scale(1 1.14)" text-anchor="middle">7ms</text><line x1="866.8" y1="585.0" x2="866.8" y2="604.0" stroke="#a9a9a9" stroke-width="2"/><text transform="translate(866.8 636.5) scale(1 1.14)" text-anchor="middle">8ms</text><line x1="962.1" y1="585.0" x2="962.1" y2="604.0" stroke="#a9a9a9" stroke-width="2"/><text transform="translate(962.1 636.5) scale(1 1.14)" text-anchor="middle">9ms</text><line x1="1057.5" y1="585.0" x2="1057.5" y2="604.0" stroke="#a9a9a9" stroke-width="2"/><text transform="translate(1057.5 636.5) scale(1 1.14)" text-anchor="middle">10ms</text><polyline points="104.00,312.50 104.48,304.35 104.95,296.20 105.43,288.07 105.91,279.97 106.38,271.90 106.86,263.86 107.34,255.88 107.81,247.95 108.29,240.09 108.77,232.29 109.24,224.58 109.72,216.95 110.20,209.42 110.67,201.99 111.15,194.66 111.63,187.46 112.10,180.38 112.58,173.42 113.06,166.61 113.53,159.94 114.01,153.42 114.49,147.05 114.97,140.85 115.44,134.82 115.92,128.97 116.40,123.29 116.87,117.80 117.35,112.51 117.83,107.41 118.30,102.51 118.78,97.83 119.26,93.35 119.73,89.09 120.21,85.05 120.69,81.23 121.16,77.65 121.64,74.29 122.12,71.17 122.59,68.29 123.07,65.65 123.55,63.25 124.02,61.10 124.50,59.19 124.98,57.54 125.45,56.14 125.93,54.99 126.41,54.10 126.88,53.46 127.36,53.07 127.84,52.94 128.31,53.07 128.79,53.46 129.27,54.10 129.74,54.99 130.22,56.14 130.70,57.54 131.17,59.19 131.65,61.10 132.13,63.25 132.60,65.65 133.08,68.29 133.56,71.17 134.04,74.29 134.51,77.65 134.99,81.23 135.47,85.05 135.94,89.09 136.42,93.35 136.90,97.83 137.37,102.51 137.85,107.41 138.33,112.51 138.80,117.80 139.28,123.29 139.76,128.97 140.23,134.82 140.71,140.85 141.19,147.05 141.66,153.42 142.14,159.94 142.62,166.61 143.09,173.42 143.57,180.38 144.05,187.46 144.52,194.66 145.00,201.99 145.48,209.42 145.95,216.95 146.43,224.58 146.91,232.29 147.38,240.09 147.86,247.95 148.34,255.88 148.81,263.86 149.29,271.90 149.77,279.97 150.24,288.07 150.72,296.20 151.20,304.35 151.68,312.50 152.15,320.65 152.63,328.80 153.11,336.93 153.58,345.03 154.06,353.10 154.54,361.14 155.01,369.12 155.49,377.05 155.97,384.91 156.44,392.71 156.92,400.42 157.40,408.05 157.87,415.58 158.35,423.01 158.83,430.34 159.30,437.54 159.78,444.62 160.26,451.58 160.73,458.39 161.21,465.06 161.69,471.58 162.16,477.95 162.64,484.15 163.12,490.18 163.59,496.03 164.07,501.71 164.55,507.20 165.02,512.49 165.50,517.59 165.98,522.49 166.45,527.17 166.93,531.65 167.41,535.91 167.88,539.95 168.36,543.77 168.84,547.35 169.31,550.71 169.79,553.83 170.27,556.71 170.75,559.35 171.22,561.75 171.70,563.90 172.18,565.81 172.65,567.46 173.13,568.86 173.61,570.01 174.08,570.90 174.56,571.54 175.04,571.93 175.51,572.06 175.99,571.93 176.47,571.54 176.94,570.90 177.42,570.01 177.90,568.86 178.37,567.46 178.85,565.81 179.33,563.90 179.80,561.75 180.28,559.35 180.76,556.71 181.23,553.83 181.71,550.71 182.19,547.35 182.66,543.77 183.14,539.95 183.62,535.91 184.09,531.65 184.57,527.17 185.05,522.49 185.52,517.59 186.00,512.49 186.48,507.20 186.95,501.71 187.43,496.03 187.91,490.18 188.38,484.15 188.86,477.95 189.34,471.58 189.81,465.06 190.29,458.39 190.77,451.58 191.25,444.62 191.72,437.54 192.20,430.34 192.68,423.01 193.15,415.58 193.63,408.05 194.11,400.42 194.58,392.71 195.06,384.91 195.54,377.05 196.01,369.12 196.49,361.14 196.97,353.10 197.44,345.03 197.92,336.93 198.40,328.80 198.87,320.65 199.35,312.50 199.83,304.35 200.30,296.20 200.78,288.07 201.26,279.97 201.73,271.90 202.21,263.86 202.69,255.88 203.16,247.95 203.64,240.09 204.12,232.29 204.59,224.58 205.07,216.95 205.55,209.42 206.02,201.99 206.50,194.66 206.98,187.46 207.45,180.38 207.93,173.42 208.41,166.61 208.88,159.94 209.36,153.42 209.84,147.05 210.32,140.85 210.79,134.82 211.27,128.97 211.75,123.29 212.22,117.80 212.70,112.51 213.18,107.41 213.65,102.51 214.13,97.83 214.61,93.35 215.08,89.09 215.56,85.05 216.04,81.23 216.51,77.65 216.99,74.29 217.47,71.17 217.94,68.29 218.42,65.65 218.90,63.25 219.37,61.10 219.85,59.19 220.33,57.54 220.80,56.14 221.28,54.99 221.76,54.10 222.23,53.46 222.71,53.07 223.19,52.94 223.66,53.07 224.14,53.46 224.62,54.10 225.09,54.99 225.57,56.14 226.05,57.54 226.52,59.19 227.00,61.10 227.48,63.25 227.95,65.65 228.43,68.29 228.91,71.17 229.39,74.29 229.86,77.65 230.34,81.23 230.82,85.05 231.29,89.09 231.77,93.35 232.25,97.83 232.72,102.51 233.20,107.41 233.68,112.51 234.15,117.80 234.63,123.29 235.11,128.97 235.58,134.82 236.06,140.85 236.54,147.05 237.01,153.42 237.49,159.94 237.97,166.61 238.44,173.42 238.92,180.38 239.40,187.46 239.87,194.66 240.35,201.99 240.83,209.42 241.30,216.95 241.78,224.58 242.26,232.29 242.73,240.09 243.21,247.95 243.69,255.88 244.16,263.86 244.64,271.90 245.12,279.97 245.59,288.07 246.07,296.20 246.55,304.35 247.02,312.50 247.50,320.65 247.98,328.80 248.46,336.93 248.93,345.03 249.41,353.10 249.89,361.14 250.36,369.12 250.84,377.05 251.32,384.91 251.79,392.71 252.27,400.42 252.75,408.05 253.22,415.58 253.70,423.01 254.18,430.34 254.65,437.54 255.13,444.62 255.61,451.58 256.08,458.39 256.56,465.06 257.04,471.58 257.51,477.95 257.99,484.15 258.47,490.18 258.94,496.03 259.42,501.71 259.90,507.20 260.37,512.49 260.85,517.59 261.33,522.49 261.80,527.17 262.28,531.65 262.76,535.91 263.23,539.95 263.71,543.77 264.19,547.35 264.66,550.71 265.14,553.83 265.62,556.71 266.10,559.35 266.57,561.75 267.05,563.90 267.53,565.81 268.00,567.46 268.48,568.86 268.96,570.01 269.43,570.90 269.91,571.54 270.39,571.93 270.86,572.06 271.34,571.93 271.82,571.54 272.29,570.90 272.77,570.01 273.25,568.86 273.72,567.46 274.20,565.81 274.68,563.90 275.15,561.75 275.63,559.35 276.11,556.71 276.58,553.83 277.06,550.71 277.54,547.35 278.01,543.77 278.49,539.95 278.97,535.91 279.44,531.65 279.92,527.17 280.40,522.49 280.87,517.59 281.35,512.49 281.83,507.20 282.30,501.71 282.78,496.03 283.26,490.18 283.73,484.15 284.21,477.95 284.69,471.58 285.16,465.06 285.64,458.39 286.12,451.58 286.60,444.62 287.07,437.54 287.55,430.34 288.03,423.01 288.50,415.58 288.98,408.05 289.46,400.42 289.93,392.71 290.41,384.91 290.89,377.05 291.36,369.12 291.84,361.14 292.32,353.10 292.79,345.03 293.27,336.93 293.75,328.80 294.22,320.65 294.70,312.50 295.18,304.35 295.65,296.20 296.13,288.07 296.61,279.97 297.08,271.90 297.56,263.86 298.04,255.88 298.51,247.95 298.99,240.09 299.47,232.29 299.94,224.58 300.42,216.95 300.90,209.42 301.37,201.99 301.85,194.66 302.33,187.46 302.80,180.38 303.28,173.42 303.76,166.61 304.24,159.94 304.71,153.42 305.19,147.05 305.67,140.85 306.14,134.82 306.62,128.97 307.10,123.29 307.57,117.80 308.05,112.51 308.53,107.41 309.00,102.51 309.48,97.83 309.96,93.35 310.43,89.09 310.91,85.05 311.39,81.23 311.86,77.65 312.34,74.29 312.82,71.17 313.29,68.29 313.77,65.65 314.25,63.25 314.72,61.10 315.20,59.19 315.68,57.54 316.15,56.14 316.63,54.99 317.11,54.10 317.58,53.46 318.06,53.07 318.54,52.94 319.01,53.07 319.49,53.46 319.97,54.10 320.44,54.99 320.92,56.14 321.40,57.54 321.87,59.19 322.35,61.10 322.83,63.25 323.30,65.65 323.78,68.29 324.26,71.17 324.74,74.29 325.21,77.65 325.69,81.23 326.17,85.05 326.64,89.09 327.12,93.35 327.60,97.83 328.07,102.51 328.55,107.41 329.03,112.51 329.50,117.80 329.98,123.29 330.46,128.97 330.93,134.82 331.41,140.85 331.89,147.05 332.36,153.42 332.84,159.94 333.32,166.61 333.79,173.42 334.27,180.38 334.75,187.46 335.22,194.66 335.70,201.99 336.18,209.42 336.65,216.95 337.13,224.58 337.61,232.29 338.08,240.09 338.56,247.95 339.04,255.88 339.51,263.86 339.99,271.90 340.47,279.97 340.94,288.07 341.42,296.20 341.90,304.35 342.38,312.50 342.85,320.65 343.33,328.80 343.81,336.93 344.28,345.03 344.76,353.10 345.24,361.14 345.71,369.12 346.19,377.05 346.67,384.91 347.14,392.71 347.62,400.42 348.10,408.05 348.57,415.58 349.05,423.01 349.53,430.34 350.00,437.54 350.48,444.62 350.96,451.58 351.43,458.39 351.91,465.06 352.39,471.58 352.86,477.95 353.34,484.15 353.82,490.18 354.29,496.03 354.77,501.71 355.25,507.20 355.72,512.49 356.20,517.59 356.68,522.49 357.15,527.17 357.63,531.65 358.11,535.91 358.58,539.95 359.06,543.77 359.54,547.35 360.01,550.71 360.49,553.83 360.97,556.71 361.44,559.35 361.92,561.75 362.40,563.90 362.88,565.81 363.35,567.46 363.83,568.86 364.31,570.01 364.78,570.90 365.26,571.54 365.74,571.93 366.21,572.06 366.69,571.93 367.17,571.54 367.64,570.90 368.12,570.01 368.60,568.86 369.07,567.46 369.55,565.81 370.03,563.90 370.50,561.75 370.98,559.35 371.46,556.71 371.93,553.83 372.41,550.71 372.89,547.35 373.36,543.77 373.84,539.95 374.32,535.91 374.79,531.65 375.27,527.17 375.75,522.49 376.22,517.59 376.70,512.49 377.18,507.20 377.65,501.71 378.13,496.03 378.61,490.18 379.08,484.15 379.56,477.95 380.04,471.58 380.51,465.06 380.99,458.39 381.47,451.58 381.95,444.62 382.42,437.54 382.90,430.34 383.38,423.01 383.85,415.58 384.33,408.05 384.81,400.42 385.28,392.71 385.76,384.91 386.24,377.05 386.71,369.12 387.19,361.14 387.67,353.10 388.14,345.03 388.62,336.93 389.10,328.80 389.57,320.65 390.05,312.50 390.53,304.35 391.00,296.20 391.48,288.07 391.96,279.97 392.43,271.90 392.91,263.86 393.39,255.88 393.86,247.95 394.34,240.09 394.82,232.29 395.29,224.58 395.77,216.95 396.25,209.42 396.72,201.99 397.20,194.66 397.68,187.46 398.15,180.38 398.63,173.42 399.11,166.61 399.58,159.94 400.06,153.42 400.54,147.05 401.02,140.85 401.49,134.82 401.97,128.97 402.45,123.29 402.92,117.80 403.40,112.51 403.88,107.41 404.35,102.51 404.83,97.83 405.31,93.35 405.78,89.09 406.26,85.05 406.74,81.23 407.21,77.65 407.69,74.29 408.17,71.17 408.64,68.29 409.12,65.65 409.60,63.25 410.07,61.10 410.55,59.19 411.03,57.54 411.50,56.14 411.98,54.99 412.46,54.10 412.93,53.46 413.41,53.07 413.89,52.94 414.36,53.07 414.84,53.46 415.32,54.10 415.79,54.99 416.27,56.14 416.75,57.54 417.22,59.19 417.70,61.10 418.18,63.25 418.65,65.65 419.13,68.29 419.61,71.17 420.09,74.29 420.56,77.65 421.04,81.23 421.52,85.05 421.99,89.09 422.47,93.35 422.95,97.83 423.42,102.51 423.90,107.41 424.38,112.51 424.85,117.80 425.33,123.29 425.81,128.97 426.28,134.82 426.76,140.85 427.24,147.05 427.71,153.42 428.19,159.94 428.67,166.61 429.14,173.42 429.62,180.38 430.10,187.46 430.57,194.66 431.05,201.99 431.53,209.42 432.00,216.95 432.48,224.58 432.96,232.29 433.43,240.09 433.91,247.95 434.39,255.88 434.86,263.86 435.34,271.90 435.82,279.97 436.29,288.07 436.77,296.20 437.25,304.35 437.72,312.50 438.20,320.65 438.68,328.80 439.16,336.93 439.63,345.03 440.11,353.10 440.59,361.14 441.06,369.12 441.54,377.05 442.02,384.91 442.49,392.71 442.97,400.42 443.45,408.05 443.92,415.58 444.40,423.01 444.88,430.34 445.35,437.54 445.83,444.62 446.31,451.58 446.78,458.39 447.26,465.06 447.74,471.58 448.21,477.95 448.69,484.15 449.17,490.18 449.64,496.03 450.12,501.71 450.60,507.20 451.07,512.49 451.55,517.59 452.03,522.49 452.50,527.17 452.98,531.65 453.46,535.91 453.93,539.95 454.41,543.77 454.89,547.35 455.36,550.71 455.84,553.83 456.32,556.71 456.80,559.35 457.27,561.75 457.75,563.90 458.23,565.81 458.70,567.46 459.18,568.86 459.66,570.01 460.13,570.90 460.61,571.54 461.09,571.93 461.56,572.06 462.04,571.93 462.52,571.54 462.99,570.90 463.47,570.01 463.95,568.86 464.42,567.46 464.90,565.81 465.38,563.90 465.85,561.75 466.33,559.35 466.81,556.71 467.28,553.83 467.76,550.71 468.24,547.35 468.71,543.77 469.19,539.95 469.67,535.91 470.14,531.65 470.62,527.17 471.10,522.49 471.57,517.59 472.05,512.49 472.53,507.20 473.00,501.71 473.48,496.03 473.96,490.18 474.43,484.15 474.91,477.95 475.39,471.58 475.86,465.06 476.34,458.39 476.82,451.58 477.30,444.62 477.77,437.54 478.25,430.34 478.73,423.01 479.20,415.58 479.68,408.05 480.16,400.42 480.63,392.71 481.11,384.91 481.59,377.05 482.06,369.12 482.54,361.14 483.02,353.10 483.49,345.03 483.97,336.93 484.45,328.80 484.92,320.65 485.40,312.50 485.88,304.35 486.35,296.20 486.83,288.07 487.31,279.97 487.78,271.90 488.26,263.86 488.74,255.88 489.21,247.95 489.69,240.09 490.17,232.29 490.64,224.58 491.12,216.95 491.60,209.42 492.07,201.99 492.55,194.66 493.03,187.46 493.50,180.38 493.98,173.42 494.46,166.61 494.93,159.94 495.41,153.42 495.89,147.05 496.37,140.85 496.84,134.82 497.32,128.97 497.80,123.29 498.27,117.80 498.75,112.51 499.23,107.41 499.70,102.51 500.18,97.83 500.66,93.35 501.13,89.09 501.61,85.05 502.09,81.23 502.56,77.65 503.04,74.29 503.52,71.17 503.99,68.29 504.47,65.65 504.95,63.25 505.42,61.10 505.90,59.19 506.38,57.54 506.85,56.14 507.33,54.99 507.81,54.10 508.28,53.46 508.76,53.07 509.24,52.94 509.71,53.07 510.19,53.46 510.67,54.10 511.14,54.99 511.62,56.14 512.10,57.54 512.57,59.19 513.05,61.10 513.53,63.25 514.00,65.65 514.48,68.29 514.96,71.17 515.44,74.29 515.91,77.65 516.39,81.23 516.87,85.05 517.34,89.09 517.82,93.35 518.30,97.83 518.77,102.51 519.25,107.41 519.73,112.51 520.20,117.80 520.68,123.29 521.16,128.97 521.63,134.82 522.11,140.85 522.59,147.05 523.06,153.42 523.54,159.94 524.02,166.61 524.49,173.42 524.97,180.38 525.45,187.46 525.92,194.66 526.40,201.99 526.88,209.42 527.35,216.95 527.83,224.58 528.31,232.29 528.78,240.09 529.26,247.95 529.74,255.88 530.21,263.86 530.69,271.90 531.17,279.97 531.64,288.07 532.12,296.20 532.60,304.35 533.08,312.50 533.55,320.65 534.03,328.80 534.51,336.93 534.98,345.03 535.46,353.10 535.94,361.14 536.41,369.12 536.89,377.05 537.37,384.91 537.84,392.71 538.32,400.42 538.80,408.05 539.27,415.58 539.75,423.01 540.23,430.34 540.70,437.54 541.18,444.62 541.66,451.58 542.13,458.39 542.61,465.06 543.09,471.58 543.56,477.95 544.04,484.15 544.52,490.18 544.99,496.03 545.47,501.71 545.95,507.20 546.42,512.49 546.90,517.59 547.38,522.49 547.85,527.17 548.33,531.65 548.81,535.91 549.28,539.95 549.76,543.77 550.24,547.35 550.71,550.71 551.19,553.83 551.67,556.71 552.14,559.35 552.62,561.75 553.10,563.90 553.58,565.81 554.05,567.46 554.53,568.86 555.01,570.01 555.48,570.90 555.96,571.54 556.44,571.93 556.91,572.06 557.39,571.93 557.87,571.54 558.34,570.90 558.82,570.01 559.30,568.86 559.77,567.46 560.25,565.81 560.73,563.90 561.20,561.75 561.68,559.35 562.16,556.71 562.63,553.83 563.11,550.71 563.59,547.35 564.06,543.77 564.54,539.95 565.02,535.91 565.49,531.65 565.97,527.17 566.45,522.49 566.92,517.59 567.40,512.49 567.88,507.20 568.35,501.71 568.83,496.03 569.31,490.18 569.78,484.15 570.26,477.95 570.74,471.58 571.22,465.06 571.69,458.39 572.17,451.58 572.65,444.62 573.12,437.54 573.60,430.34 574.08,423.01 574.55,415.58 575.03,408.05 575.51,400.42 575.98,392.71 576.46,384.91 576.94,377.05 577.41,369.12 577.89,361.14 578.37,353.10 578.84,345.03 579.32,336.93 579.80,328.80 580.27,320.65 580.75,312.50 581.23,304.35 581.70,296.20 582.18,288.07 582.66,279.97 583.13,271.90 583.61,263.86 584.09,255.88 584.56,247.95 585.04,240.09 585.52,232.29 585.99,224.58 586.47,216.95 586.95,209.42 587.42,201.99 587.90,194.66 588.38,187.46 588.85,180.38 589.33,173.42 589.81,166.61 590.28,159.94 590.76,153.42 591.24,147.05 591.72,140.85 592.19,134.82 592.67,128.97 593.15,123.29 593.62,117.80 594.10,112.51 594.58,107.41 595.05,102.51 595.53,97.83 596.01,93.35 596.48,89.09 596.96,85.05 597.44,81.23 597.91,77.65 598.39,74.29 598.87,71.17 599.34,68.29 599.82,65.65 600.30,63.25 600.77,61.10 601.25,59.19 601.73,57.54 602.20,56.14 602.68,54.99 603.16,54.10 603.63,53.46 604.11,53.07 604.59,52.94 605.06,53.07 605.54,53.46 606.02,54.10 606.49,54.99 606.97,56.14 607.45,57.54 607.92,59.19 608.40,61.10 608.88,63.25 609.36,65.65 609.83,68.29 610.31,71.17 610.79,74.29 611.26,77.65 611.74,81.23 612.22,85.05 612.69,89.09 613.17,93.35 613.65,97.83 614.12,102.51 614.60,107.41 615.08,112.51 615.55,117.80 616.03,123.29 616.51,128.97 616.98,134.82 617.46,140.85 617.94,147.05 618.41,153.42 618.89,159.94 619.37,166.61 619.84,173.42 620.32,180.38 620.80,187.46 621.27,194.66 621.75,201.99 622.23,209.42 622.70,216.95 623.18,224.58 623.66,232.29 624.13,240.09 624.61,247.95 625.09,255.88 625.56,263.86 626.04,271.90 626.52,279.97 626.99,288.07 627.47,296.20 627.95,304.35 628.42,312.50 628.90,320.65 629.38,328.80 629.86,336.93 630.33,345.03 630.81,353.10 631.29,361.14 631.76,369.12 632.24,377.05 632.72,384.91 633.19,392.71 633.67,400.42 634.15,408.05 634.62,415.58 635.10,423.01 635.58,430.34 636.05,437.54 636.53,444.62 637.01,451.58 637.48,458.39 637.96,465.06 638.44,471.58 638.91,477.95 639.39,484.15 639.87,490.18 640.34,496.03 640.82,501.71 641.30,507.20 641.77,512.49 642.25,517.59 642.73,522.49 643.20,527.17 643.68,531.65 644.16,535.91 644.63,539.95 645.11,543.77 645.59,547.35 646.06,550.71 646.54,553.83 647.02,556.71 647.50,559.35 647.97,561.75 648.45,563.90 648.93,565.81 649.40,567.46 649.88,568.86 650.36,570.01 650.83,570.90 651.31,571.54 651.79,571.93 652.26,572.06 652.74,571.93 653.22,571.54 653.69,570.90 654.17,570.01 654.65,568.86 655.12,567.46 655.60,565.81 656.08,563.90 656.55,561.75 657.03,559.35 657.51,556.71 657.98,553.83 658.46,550.71 658.94,547.35 659.41,543.77 659.89,539.95 660.37,535.91 660.84,531.65 661.32,527.17 661.80,522.49 662.27,517.59 662.75,512.49 663.23,507.20 663.70,501.71 664.18,496.03 664.66,490.18 665.13,484.15 665.61,477.95 666.09,471.58 666.57,465.06 667.04,458.39 667.52,451.58 668.00,444.62 668.47,437.54 668.95,430.34 669.43,423.01 669.90,415.58 670.38,408.05 670.86,400.42 671.33,392.71 671.81,384.91 672.29,377.05 672.76,369.12 673.24,361.14 673.72,353.10 674.19,345.03 674.67,336.93 675.15,328.80 675.62,320.65 676.10,312.50 676.58,304.35 677.05,296.20 677.53,288.07 678.01,279.97 678.48,271.90 678.96,263.86 679.44,255.88 679.91,247.95 680.39,240.09 680.87,232.29 681.34,224.58 681.82,216.95 682.30,209.42 682.77,201.99 683.25,194.66 683.73,187.46 684.20,180.38 684.68,173.42 685.16,166.61 685.63,159.94 686.11,153.42 686.59,147.05 687.07,140.85 687.54,134.82 688.02,128.97 688.50,123.29 688.97,117.80 689.45,112.51 689.93,107.41 690.40,102.51 690.88,97.83 691.36,93.35 691.83,89.09 692.31,85.05 692.79,81.23 693.26,77.65 693.74,74.29 694.22,71.17 694.69,68.29 695.17,65.65 695.65,63.25 696.12,61.10 696.60,59.19 697.08,57.54 697.55,56.14 698.03,54.99 698.51,54.10 698.98,53.46 699.46,53.07 699.94,52.94 700.41,53.07 700.89,53.46 701.37,54.10 701.84,54.99 702.32,56.14 702.80,57.54 703.27,59.19 703.75,61.10 704.23,63.25 704.70,65.65 705.18,68.29 705.66,71.17 706.14,74.29 706.61,77.65 707.09,81.23 707.57,85.05 708.04,89.09 708.52,93.35 709.00,97.83 709.47,102.51 709.95,107.41 710.43,112.51 710.90,117.80 711.38,123.29 711.86,128.97 712.33,134.82 712.81,140.85 713.29,147.05 713.76,153.42 714.24,159.94 714.72,166.61 715.19,173.42 715.67,180.38 716.15,187.46 716.62,194.66 717.10,201.99 717.58,209.42 718.05,216.95 718.53,224.58 719.01,232.29 719.48,240.09 719.96,247.95 720.44,255.88 720.91,263.86 721.39,271.90 721.87,279.97 722.34,288.07 722.82,296.20 723.30,304.35 723.77,312.50 724.25,320.65 724.73,328.80 725.21,336.93 725.68,345.03 726.16,353.10 726.64,361.14 727.11,369.12 727.59,377.05 728.07,384.91 728.54,392.71 729.02,400.42 729.50,408.05 729.97,415.58 730.45,423.01 730.93,430.34 731.40,437.54 731.88,444.62 732.36,451.58 732.83,458.39 733.31,465.06 733.79,471.58 734.26,477.95 734.74,484.15 735.22,490.18 735.69,496.03 736.17,501.71 736.65,507.20 737.12,512.49 737.60,517.59 738.08,522.49 738.55,527.17 739.03,531.65 739.51,535.91 739.98,539.95 740.46,543.77 740.94,547.35 741.41,550.71 741.89,553.83 742.37,556.71 742.85,559.35 743.32,561.75 743.80,563.90 744.28,565.81 744.75,567.46 745.23,568.86 745.71,570.01 746.18,570.90 746.66,571.54 747.14,571.93 747.61,572.06 748.09,571.93 748.57,571.54 749.04,570.90 749.52,570.01 750.00,568.86 750.47,567.46 750.95,565.81 751.43,563.90 751.90,561.75 752.38,559.35 752.86,556.71 753.33,553.83 753.81,550.71 754.29,547.35 754.76,543.77 755.24,539.95 755.72,535.91 756.19,531.65 756.67,527.17 757.15,522.49 757.62,517.59 758.10,512.49 758.58,507.20 759.05,501.71 759.53,496.03 760.01,490.18 760.48,484.15 760.96,477.95 761.44,471.58 761.91,465.06 762.39,458.39 762.87,451.58 763.35,444.62 763.82,437.54 764.30,430.34 764.78,423.01 765.25,415.58 765.73,408.05 766.21,400.42 766.68,392.71 767.16,384.91 767.64,377.05 768.11,369.12 768.59,361.14 769.07,353.10 769.54,345.03 770.02,336.93 770.50,328.80 770.97,320.65 771.45,312.50 771.93,304.35 772.40,296.20 772.88,288.07 773.36,279.97 773.83,271.90 774.31,263.86 774.79,255.88 775.26,247.95 775.74,240.09 776.22,232.29 776.69,224.58 777.17,216.95 777.65,209.42 778.12,201.99 778.60,194.66 779.08,187.46 779.55,180.38 780.03,173.42 780.51,166.61 780.98,159.94 781.46,153.42 781.94,147.05 782.42,140.85 782.89,134.82 783.37,128.97 783.85,123.29 784.32,117.80 784.80,112.51 785.28,107.41 785.75,102.51 786.23,97.83 786.71,93.35 787.18,89.09 787.66,85.05 788.14,81.23 788.61,77.65 789.09,74.29 789.57,71.17 790.04,68.29 790.52,65.65 791.00,63.25 791.47,61.10 791.95,59.19 792.43,57.54 792.90,56.14 793.38,54.99 793.86,54.10 794.33,53.46 794.81,53.07 795.29,52.94 795.76,53.07 796.24,53.46 796.72,54.10 797.19,54.99 797.67,56.14 798.15,57.54 798.62,59.19 799.10,61.10 799.58,63.25 800.05,65.65 800.53,68.29 801.01,71.17 801.49,74.29 801.96,77.65 802.44,81.23 802.92,85.05 803.39,89.09 803.87,93.35 804.35,97.83 804.82,102.51 805.30,107.41 805.78,112.51 806.25,117.80 806.73,123.29 807.21,128.97 807.68,134.82 808.16,140.85 808.64,147.05 809.11,153.42 809.59,159.94 810.07,166.61 810.54,173.42 811.02,180.38 811.50,187.46 811.97,194.66 812.45,201.99 812.93,209.42 813.40,216.95 813.88,224.58 814.36,232.29 814.83,240.09 815.31,247.95 815.79,255.88 816.26,263.86 816.74,271.90 817.22,279.97 817.69,288.07 818.17,296.20 818.65,304.35 819.12,312.50 819.60,320.65 820.08,328.80 820.56,336.93 821.03,345.03 821.51,353.10 821.99,361.14 822.46,369.12 822.94,377.05 823.42,384.91 823.89,392.71 824.37,400.42 824.85,408.05 825.32,415.58 825.80,423.01 826.28,430.34 826.75,437.54 827.23,444.62 827.71,451.58 828.18,458.39 828.66,465.06 829.14,471.58 829.61,477.95 830.09,484.15 830.57,490.18 831.04,496.03 831.52,501.71 832.00,507.20 832.47,512.49 832.95,517.59 833.43,522.49 833.90,527.17 834.38,531.65 834.86,535.91 835.33,539.95 835.81,543.77 836.29,547.35 836.76,550.71 837.24,553.83 837.72,556.71 838.19,559.35 838.67,561.75 839.15,563.90 839.63,565.81 840.10,567.46 840.58,568.86 841.06,570.01 841.53,570.90 842.01,571.54 842.49,571.93 842.96,572.06 843.44,571.93 843.92,571.54 844.39,570.90 844.87,570.01 845.35,568.86 845.82,567.46 846.30,565.81 846.78,563.90 847.25,561.75 847.73,559.35 848.21,556.71 848.68,553.83 849.16,550.71 849.64,547.35 850.11,543.77 850.59,539.95 851.07,535.91 851.54,531.65 852.02,527.17 852.50,522.49 852.97,517.59 853.45,512.49 853.93,507.20 854.40,501.71 854.88,496.03 855.36,490.18 855.83,484.15 856.31,477.95 856.79,471.58 857.26,465.06 857.74,458.39 858.22,451.58 858.70,444.62 859.17,437.54 859.65,430.34 860.13,423.01 860.60,415.58 861.08,408.05 861.56,400.42 862.03,392.71 862.51,384.91 862.99,377.05 863.46,369.12 863.94,361.14 864.42,353.10 864.89,345.03 865.37,336.93 865.85,328.80 866.32,320.65 866.80,312.50 867.28,304.35 867.75,296.20 868.23,288.07 868.71,279.97 869.18,271.90 869.66,263.86 870.14,255.88 870.61,247.95 871.09,240.09 871.57,232.29 872.04,224.58 872.52,216.95 873.00,209.42 873.47,201.99 873.95,194.66 874.43,187.46 874.90,180.38 875.38,173.42 875.86,166.61 876.33,159.94 876.81,153.42 877.29,147.05 877.77,140.85 878.24,134.82 878.72,128.97 879.20,123.29 879.67,117.80 880.15,112.51 880.63,107.41 881.10,102.51 881.58,97.83 882.06,93.35 882.53,89.09 883.01,85.05 883.49,81.23 883.96,77.65 884.44,74.29 884.92,71.17 885.39,68.29 885.87,65.65 886.35,63.25 886.82,61.10 887.30,59.19 887.78,57.54 888.25,56.14 888.73,54.99 889.21,54.10 889.68,53.46 890.16,53.07 890.64,52.94 891.11,53.07 891.59,53.46 892.07,54.10 892.54,54.99 893.02,56.14 893.50,57.54 893.97,59.19 894.45,61.10 894.93,63.25 895.40,65.65 895.88,68.29 896.36,71.17 896.84,74.29 897.31,77.65 897.79,81.23 898.27,85.05 898.74,89.09 899.22,93.35 899.70,97.83 900.17,102.51 900.65,107.41 901.13,112.51 901.60,117.80 902.08,123.29 902.56,128.97 903.03,134.82 903.51,140.85 903.99,147.05 904.46,153.42 904.94,159.94 905.42,166.61 905.89,173.42 906.37,180.38 906.85,187.46 907.32,194.66 907.80,201.99 908.28,209.42 908.75,216.95 909.23,224.58 909.71,232.29 910.18,240.09 910.66,247.95 911.14,255.88 911.61,263.86 912.09,271.90 912.57,279.97 913.04,288.07 913.52,296.20 914.00,304.35 914.47,312.50 914.95,320.65 915.43,328.80 915.91,336.93 916.38,345.03 916.86,353.10 917.34,361.14 917.81,369.12 918.29,377.05 918.77,384.91 919.24,392.71 919.72,400.42 920.20,408.05 920.67,415.58 921.15,423.01 921.63,430.34 922.10,437.54 922.58,444.62 923.06,451.58 923.53,458.39 924.01,465.06 924.49,471.58 924.96,477.95 925.44,484.15 925.92,490.18 926.39,496.03 926.87,501.71 927.35,507.20 927.82,512.49 928.30,517.59 928.78,522.49 929.25,527.17 929.73,531.65 930.21,535.91 930.68,539.95 931.16,543.77 931.64,547.35 932.11,550.71 932.59,553.83 933.07,556.71 933.54,559.35 934.02,561.75 934.50,563.90 934.98,565.81 935.45,567.46 935.93,568.86 936.41,570.01 936.88,570.90 937.36,571.54 937.84,571.93 938.31,572.06 938.79,571.93 939.27,571.54 939.74,570.90 940.22,570.01 940.70,568.86 941.17,567.46 941.65,565.81 942.13,563.90 942.60,561.75 943.08,559.35 943.56,556.71 944.03,553.83 944.51,550.71 944.99,547.35 945.46,543.77 945.94,539.95 946.42,535.91 946.89,531.65 947.37,527.17 947.85,522.49 948.32,517.59 948.80,512.49 949.28,507.20 949.75,501.71 950.23,496.03 950.71,490.18 951.18,484.15 951.66,477.95 952.14,471.58 952.62,465.06 953.09,458.39 953.57,451.58 954.05,444.62 954.52,437.54 955.00,430.34 955.48,423.01 955.95,415.58 956.43,408.05 956.91,400.42 957.38,392.71 957.86,384.91 958.34,377.05 958.81,369.12 959.29,361.14 959.77,353.10 960.24,345.03 960.72,336.93 961.20,328.80 961.67,320.65 962.15,312.50 962.63,304.35 963.10,296.20 963.58,288.07 964.06,279.97 964.53,271.90 965.01,263.86 965.49,255.88 965.96,247.95 966.44,240.09 966.92,232.29 967.39,224.58 967.87,216.95 968.35,209.42 968.82,201.99 969.30,194.66 969.78,187.46 970.25,180.38 970.73,173.42 971.21,166.61 971.68,159.94 972.16,153.42 972.64,147.05 973.12,140.85 973.59,134.82 974.07,128.97 974.55,123.29 975.02,117.80 975.50,112.51 975.98,107.41 976.45,102.51 976.93,97.83 977.41,93.35 977.88,89.09 978.36,85.05 978.84,81.23 979.31,77.65 979.79,74.29 980.27,71.17 980.74,68.29 981.22,65.65 981.70,63.25 982.17,61.10 982.65,59.19 983.13,57.54 983.60,56.14 984.08,54.99 984.56,54.10 985.03,53.46 985.51,53.07 985.99,52.94 986.46,53.07 986.94,53.46 987.42,54.10 987.89,54.99 988.37,56.14 988.85,57.54 989.32,59.19 989.80,61.10 990.28,63.25 990.75,65.65 991.23,68.29 991.71,71.17 992.19,74.29 992.66,77.65 993.14,81.23 993.62,85.05 994.09,89.09 994.57,93.35 995.05,97.83 995.52,102.51 996.00,107.41 996.48,112.51 996.95,117.80 997.43,123.29 997.91,128.97 998.38,134.82 998.86,140.85 999.34,147.05 999.81,153.42 1000.29,159.94 1000.77,166.61 1001.24,173.42 1001.72,180.38 1002.20,187.46 1002.67,194.66 1003.15,201.99 1003.63,209.42 1004.10,216.95 1004.58,224.58 1005.06,232.29 1005.53,240.09 1006.01,247.95 1006.49,255.88 1006.96,263.86 1007.44,271.90 1007.92,279.97 1008.39,288.07 1008.87,296.20 1009.35,304.35 1009.82,312.50 1010.30,320.65 1010.78,328.80 1011.26,336.93 1011.73,345.03 1012.21,353.10 1012.69,361.14 1013.16,369.12 1013.64,377.05 1014.12,384.91 1014.59,392.71 1015.07,400.42 1015.55,408.05 1016.02,415.58 1016.50,423.01 1016.98,430.34 1017.45,437.54 1017.93,444.62 1018.41,451.58 1018.88,458.39 1019.36,465.06 1019.84,471.58 1020.31,477.95 1020.79,484.15 1021.27,490.18 1021.74,496.03 1022.22,501.71 1022.70,507.20 1023.17,512.49 1023.65,517.59 1024.13,522.49 1024.60,527.17 1025.08,531.65 1025.56,535.91 1026.03,539.95 1026.51,543.77 1026.99,547.35 1027.46,550.71 1027.94,553.83 1028.42,556.71 1028.89,559.35 1029.37,561.75 1029.85,563.90 1030.33,565.81 1030.80,567.46 1031.28,568.86 1031.76,570.01 1032.23,570.90 1032.71,571.54 1033.19,571.93 1033.66,572.06 1034.14,571.93 1034.62,571.54 1035.09,570.90 1035.57,570.01 1036.05,568.86 1036.52,567.46 1037.00,565.81 1037.48,563.90 1037.95,561.75 1038.43,559.35 1038.91,556.71 1039.38,553.83 1039.86,550.71 1040.34,547.35 1040.81,543.77 1041.29,539.95 1041.77,535.91 1042.24,531.65 1042.72,527.17 1043.20,522.49 1043.67,517.59 1044.15,512.49 1044.63,507.20 1045.10,501.71 1045.58,496.03 1046.06,490.18 1046.53,484.15 1047.01,477.95 1047.49,471.58 1047.97,465.06 1048.44,458.39 1048.92,451.58 1049.40,444.62 1049.87,437.54 1050.35,430.34 1050.83,423.01 1051.30,415.58 1051.78,408.05 1052.26,400.42 1052.73,392.71 1053.21,384.91 1053.69,377.05 1054.16,369.12 1054.64,361.14 1055.12,353.10 1055.59,345.03 1056.07,336.93 1056.55,328.80 1057.02,320.65 1057.50,312.50" fill="none" stroke="#1ff01f" stroke-width="2.2"/><text transform="translate(580.8 33) scale(1 1.14)" text-anchor="middle" fill="#22ee22" style="font-weight:bold">V(vout)</text></svg></div></div>
</div>
</body></html>
